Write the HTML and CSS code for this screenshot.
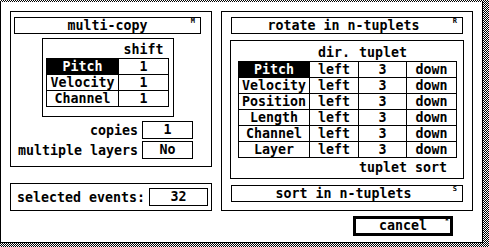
FILE: index.html
```html
<!DOCTYPE html>
<html>
<head>
<meta charset="utf-8">
<link rel="stylesheet" href="styles.css">
</head>
<body>
<div class="screen">
  <div class="dialog">
    <div class="col-left">
      <section class="panel panel-copy">
        <div class="title-box">multi-copy<span class="key">M</span></div>
        <div class="tbox tbox-copy">
          <div class="thead cols-copy"><span></span><span class="hcell">shift</span></div>
          <div class="grid cols-copy">
            <span class="cell sel">Pitch</span><span class="cell">1</span>
            <span class="cell">Velocity</span><span class="cell">1</span>
            <span class="cell">Channel</span><span class="cell">1</span>
          </div>
        </div>
        <div class="field-row first"><span class="flabel">copies</span><span class="field">1</span></div>
        <div class="field-row"><span class="flabel">multiple layers</span><span class="field">No</span></div>
      </section>
      <section class="sel-box"><span class="flabel">selected events:</span><span class="field field-wide">32</span></section>
    </div>
    <div class="col-right">
      <section class="panel panel-rot">
        <div class="title-box title-rot">rotate in n-tuplets<span class="key">R</span></div>
        <div class="tbox tbox-rot">
          <div class="thead cols-rot"><span></span><span class="hcell">dir.</span><span class="hcell">tuplet</span><span></span></div>
          <div class="grid cols-rot">
            <span class="cell sel">Pitch</span><span class="cell">left</span><span class="cell">3</span><span class="cell">down</span>
            <span class="cell">Velocity</span><span class="cell">left</span><span class="cell">3</span><span class="cell">down</span>
            <span class="cell">Position</span><span class="cell">left</span><span class="cell">3</span><span class="cell">down</span>
            <span class="cell">Length</span><span class="cell">left</span><span class="cell">3</span><span class="cell">down</span>
            <span class="cell">Channel</span><span class="cell">left</span><span class="cell">3</span><span class="cell">down</span>
            <span class="cell">Layer</span><span class="cell">left</span><span class="cell">3</span><span class="cell">down</span>
          </div>
          <div class="tfoot cols-rot"><span class="fcell">tuplet sort</span></div>
        </div>
        <div class="title-box title-rot sort-box">sort in n-tuplets<span class="key">S</span></div>
      </section>
      <div class="btn">cancel<span class="key key-btn">*</span></div>
    </div>
  </div>
</div>
</body>
</html>
```

FILE: styles.css
```css
* {
  box-sizing: border-box;
  margin: 0;
  padding: 0;
}

html,
body {
  width: 489px;
  height: 247px;
  overflow: hidden;
  background: #fff;
}

body {
  font: bold 13.29px/15px "DejaVu Sans Mono", "Liberation Mono", monospace;
  color: #000;
}

.screen {
  width: 489px;
  height: 247px;
  padding-top: 2px;
  background-color: #fff;
  background-image: repeating-conic-gradient(#000 0% 25%, #fff 0% 50%);
  background-size: 2px 2px;
}

.dialog {
  width: 483px;
  height: 241px;
  background: #fff;
  border: 1px solid #000;
  border-top: 0;
  padding: 9px 9px 6px 9px;
  display: grid;
  grid-template-columns: 202px 252px;
  column-gap: 9px;
  align-items: start;
}

.panel {
  border: 1px solid #000;
}

.panel-copy {
  height: 156px;
  padding: 5px 10px 0 3px;
}

.panel-rot {
  height: 200px;
  padding: 5px 9px 0 9px;
}

.title-box {
  position: relative;
  height: 17px;
  border: 1px solid #000;
  text-align: center;
  line-height: 15px;
  white-space: nowrap;
}

.title-rot {
  padding-right: 7px;
}

.sort-box {
  margin-top: 6px;
}

.key {
  position: absolute;
  top: 0;
  right: 5px;
  font: bold 7px/7px "DejaVu Sans Mono", monospace;
}

.tbox {
  border: 1px solid #000;
}

.tbox-copy {
  width: 132px;
  margin: 4px 0 0 28px;
  padding: 3px 4px 9px 3px;
}

.tbox-rot {
  width: 234px;
  margin: 6px -1px 0;
  padding: 4px 6px 2px 7px;
}

.cols-copy {
  grid-template-columns: 72px 50px;
}

.cols-rot {
  grid-template-columns: 71px 49px 48px 50px;
}

.thead,
.tfoot {
  display: grid;
  padding-left: 1px;
  height: 16px;
  line-height: 16px;
  white-space: nowrap;
}

.hcell {
  text-align: center;
  padding-right: 1px;
}

.tfoot {
  margin-top: 2px;
}

.fcell {
  grid-column: 3 / 5;
}

.grid {
  display: grid;
  width: max-content;
  border-left: 1px solid #000;
  border-top: 1px solid #000;
  grid-auto-rows: 16px;
}

.cell {
  border-right: 1px solid #000;
  border-bottom: 1px solid #000;
  text-align: center;
  line-height: 15px;
  white-space: nowrap;
}

.cell.sel {
  background: #000;
  color: #fff;
}

.field-row {
  display: flex;
  justify-content: flex-end;
  align-items: center;
  height: 18px;
  gap: 4px;
  margin: 2px 8px 0 0;
}

.field-row.first {
  margin-top: 4px;
}

.flabel {
  white-space: nowrap;
}

.field {
  width: 51px;
  height: 18px;
  border: 1px solid #000;
  text-align: center;
  line-height: 16px;
}

.sel-box {
  margin-top: 16px;
  height: 28px;
  border: 1px solid #000;
  display: flex;
  align-items: center;
  padding-left: 6px;
}

.field-wide {
  width: 59px;
  margin-left: 4px;
}

.btn {
  position: relative;
  width: 100px;
  height: 20px;
  border: 3px solid #000;
  margin: 5px 20px 0 auto;
  text-align: center;
  line-height: 14px;
}

.key-btn {
  top: -1px;
  right: 1px;
}
```
